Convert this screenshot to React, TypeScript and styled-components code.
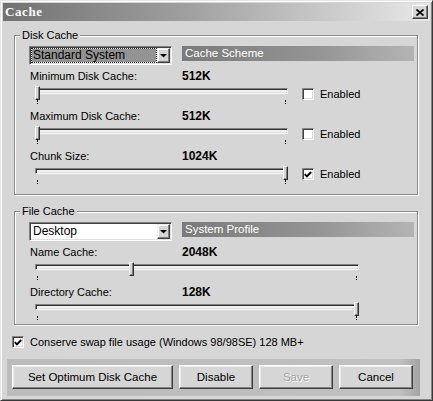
import styled, { createGlobalStyle } from "styled-components";

const FACE = "#d6d6d6";

const GlobalStyle = createGlobalStyle`
  html, body {
    margin: 0;
    padding: 0;
    background: ${FACE};
  }
  body {
    font-family: "Liberation Sans", Arial, sans-serif;
    font-size: 11px;
    color: #000;
  }
`;

interface SettingProps {
  label: string;
  value: string;
  width: number;
  pos: number;
  enabled?: boolean;
}

interface DropdownProps {
  text: string;
  focused?: boolean;
}

function CheckMark() {
  return (
    <svg width="8" height="7" viewBox="0 0 8 7">
      <polyline
        points="0.8,3.2 2.9,5.4 7.2,1"
        fill="none"
        stroke="#000"
        strokeWidth="1.9"
      />
    </svg>
  );
}

function Check(props: { checked?: boolean; text: string }) {
  return (
    <CheckLabel>
      <CheckBox>{props.checked && <CheckMark />}</CheckBox>
      <span>{props.text}</span>
    </CheckLabel>
  );
}

function Dropdown(props: DropdownProps) {
  const { text, focused } = props;
  return (
    <DropBox>
      <DropField $focused={focused}>{text}</DropField>
      <ArrowButton>
        <svg width="7" height="4" viewBox="0 0 7 4">
          <polygon points="0,0 7,0 3.5,3.6" fill="#000" />
        </svg>
      </ArrowButton>
    </DropBox>
  );
}

function Slider(props: { width: number; pos: number }) {
  const { width, pos } = props;
  const left = Math.round(pos * (width - 5));
  return (
    <SliderBox $width={width}>
      <Track />
      <Ticks />
      <Thumb style={{ left }} />
    </SliderBox>
  );
}

function Setting(props: SettingProps) {
  const { label, value, width, pos, enabled } = props;
  return (
    <>
      <LabelRow>
        <Label>{label}</Label>
        <Value>{value}</Value>
      </LabelRow>
      <SliderRow>
        <Slider width={width} pos={pos} />
        {enabled !== undefined && (
          <EnabledWrap>
            <Check checked={enabled} text="Enabled" />
          </EnabledWrap>
        )}
      </SliderRow>
    </>
  );
}

export default function App() {
  return (
    <>
      <GlobalStyle />
      <Window>
        <TitleBar>
          <Title>Cache</Title>
          <CloseButton>
            <svg width="8" height="7" viewBox="0 0 8 7">
              <path d="M0.5 0.5 L7.5 6.5 M7.5 0.5 L0.5 6.5" stroke="#000" strokeWidth="1.7" />
            </svg>
          </CloseButton>
        </TitleBar>

        <GroupBox $top={8} $bottom={6}>
          <Legend>Disk Cache</Legend>
          <Inner>
            <TopRow>
              <Dropdown text="Standard System" focused />
              <SchemeBar>Cache Scheme</SchemeBar>
            </TopRow>
            <Settings>
              <Setting label="Minimum Disk Cache:" value="512K" width={253} pos={0} enabled={false} />
              <Setting label="Maximum Disk Cache:" value="512K" width={253} pos={0} enabled={false} />
              <Setting label="Chunk Size:" value="1024K" width={253} pos={1} enabled />
            </Settings>
          </Inner>
        </GroupBox>

        <GroupBox $top={10} $bottom={0}>
          <Legend>File Cache</Legend>
          <Inner>
            <TopRow>
              <Dropdown text="Desktop" />
              <SchemeBar>System Profile</SchemeBar>
            </TopRow>
            <Settings>
              <Setting label="Name Cache:" value="2048K" width={324} pos={0.295} />
              <Setting label="Directory Cache:" value="128K" width={324} pos={1} />
            </Settings>
          </Inner>
        </GroupBox>

        <ConserveRow>
          <Check checked text="Conserve swap file usage (Windows 98/98SE) 128 MB+" />
        </ConserveRow>

        <ButtonBar>
          <Button $width={161}>Set Optimum Disk Cache</Button>
          <Button $width={74}>Disable</Button>
          <Button $width={74} disabled>
            Save
          </Button>
          <Button $width={74}>Cancel</Button>
        </ButtonBar>
      </Window>
    </>
  );
}

const Window = styled.div`
  width: 433px;
  height: 401px;
  box-sizing: border-box;
  padding: 2px;
  background: ${FACE};
  border: 1px solid;
  border-color: #e6e6e6 #383838 #383838 #e6e6e6;
  box-shadow: inset 1px 1px 0 #fff, inset -1px -1px 0 #848484;
  display: flex;
  flex-direction: column;
`;

const TitleBar = styled.div`
  height: 18px;
  flex-shrink: 0;
  display: flex;
  align-items: center;
  justify-content: space-between;
  padding-left: 2px;
  background: linear-gradient(90deg, #727272 0%, #9c9c9c 40%, #e8e8e8 100%);
`;

const Title = styled.span`
  font-family: "Liberation Serif", "Times New Roman", serif;
  font-weight: bold;
  font-size: 13px;
  letter-spacing: 0.6px;
  color: #fff;
`;

const CloseButton = styled.div`
  width: 16px;
  height: 14px;
  margin-right: 2px;
  box-sizing: border-box;
  background: ${FACE};
  border: 1px solid;
  border-color: #fff #404040 #404040 #fff;
  box-shadow: inset -1px -1px 0 #808080;
  display: flex;
  align-items: center;
  justify-content: center;
`;

const GroupBox = styled.fieldset<{ $top: number; $bottom: number }>`
  margin: ${(p) => p.$top}px 12px 0 11px;
  padding: 4px 3px ${(p) => p.$bottom}px 5px;
  min-width: 0;
  border: 1px solid #8a8a8a;
  box-shadow: inset 1px 1px 0 #fff, 1px 1px 0 #fff;
`;

const Legend = styled.legend`
  padding: 0 2px;
  line-height: 13px;
  background: ${FACE};
`;

const Inner = styled.div`
  padding-left: 9px;
  display: flex;
  flex-direction: column;
`;

const TopRow = styled.div`
  display: flex;
  align-items: flex-start;
  gap: 10px;
`;

const DropBox = styled.div`
  width: 143px;
  height: 19px;
  box-sizing: border-box;
  background: #fff;
  border: 1px solid;
  border-color: #808080 #fff #fff #808080;
  box-shadow: inset 1px 1px 0 #404040, inset -1px -1px 0 #e0e0e0;
  padding: 1px;
  display: flex;
`;

const DropField = styled.div<{ $focused?: boolean }>`
  flex: 1;
  margin: 1px;
  padding-left: 1px;
  line-height: 13px;
  box-sizing: border-box;
  font-size: 12px;
  background: ${(p) => (p.$focused ? "#939393" : "transparent")};
  outline: ${(p) => (p.$focused ? "1px dotted #2a2a2a" : "none")};
`;

const ArrowButton = styled.div`
  width: 13px;
  box-sizing: border-box;
  background: ${FACE};
  border: 1px solid;
  border-color: #efefef #404040 #404040 #efefef;
  box-shadow: inset -1px -1px 0 #808080, inset 1px 1px 0 #fff;
  display: flex;
  align-items: center;
  justify-content: center;
`;

const SchemeBar = styled.div`
  flex: 1;
  height: 15px;
  line-height: 15px;
  padding-left: 3px;
  color: #fff;
  font-size: 11.5px;
  background: linear-gradient(90deg, #7a7a7a 0%, #959595 60%, #b4b4b4 100%);
`;

const Settings = styled.div`
  margin-top: 3px;
  display: flex;
  flex-direction: column;
`;

const LabelRow = styled.div`
  display: grid;
  grid-template-columns: 153px auto;
  height: 16px;
  align-items: center;
`;

const Label = styled.span`
  padding-left: 1px;
`;

const Value = styled.span`
  font-weight: bold;
  font-size: 12px;
`;

const SliderRow = styled.div`
  height: 24px;
  padding-left: 6px;
  display: flex;
  align-items: flex-start;
`;

const SliderBox = styled.div<{ $width: number }>`
  position: relative;
  width: ${(p) => p.$width}px;
  height: 24px;
`;

const Track = styled.div`
  height: 6px;
  margin-top: 4px;
  box-sizing: border-box;
  background: #f3f3f3;
  border: 1px solid;
  border-color: #808080 #fff #fff #808080;
  box-shadow: inset 1px 1px 0 #303030, inset -1px -1px 0 #dcdcdc;
`;

const Ticks = styled.div`
  height: 4px;
  margin: 6px 2px 0;
  border-left: 1px dotted #000;
  border-right: 1px dotted #000;
`;

const Thumb = styled.div`
  position: absolute;
  top: 2px;
  width: 5px;
  height: 14px;
  box-sizing: border-box;
  background: ${FACE};
  border: 1px solid;
  border-color: #fff #303030 #303030 #fff;
  box-shadow: inset -1px -1px 0 #808080;
`;

const EnabledWrap = styled.div`
  margin: 4px 0 0 14px;
`;

const CheckLabel = styled.div`
  display: flex;
  align-items: center;
  gap: 6px;
  height: 12px;
`;

const CheckBox = styled.div`
  width: 12px;
  height: 12px;
  box-sizing: border-box;
  background: #fff;
  border: 1px solid;
  border-color: #808080 #fff #fff #808080;
  box-shadow: inset 1px 1px 0 #404040, inset -1px -1px 0 #d8d8d8;
  display: flex;
  align-items: center;
  justify-content: center;
`;

const ConserveRow = styled.div`
  margin: 10px 0 0 9px;
  height: 14px;
  display: flex;
  align-items: center;
`;

const ButtonBar = styled.div`
  margin: 10px 10px 0 4px;
  padding: 6px 7px 7px 5px;
  display: flex;
  gap: 6px;
  background: linear-gradient(90deg, #bcbcbc 0%, #c0c0c0 95%, #a4a4a4 100%);
`;

const Button = styled.button<{ $width: number }>`
  width: ${(p) => p.$width}px;
  height: 24px;
  box-sizing: border-box;
  padding: 0;
  font-family: "Liberation Sans", Arial, sans-serif;
  font-size: 11.5px;
  color: #000;
  background: ${FACE};
  border: 1px solid;
  border-color: #fff #404040 #404040 #fff;
  border-radius: 0;
  box-shadow: inset -1px -1px 0 #808080, inset 1px 1px 0 #ececec;

  &:disabled {
    color: #a2a2a2;
    text-shadow: 1px 1px 0 #fff;
  }
`;
